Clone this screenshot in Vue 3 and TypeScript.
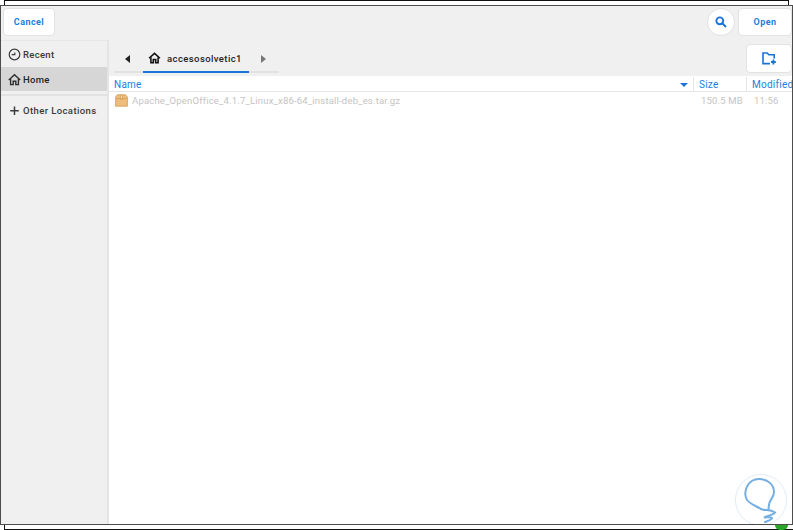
<script setup lang="ts">
const crumbs = 'accesosolvetic1'
</script>

<template>
  <div class="page">
    <div class="behind-top"></div>
    <div class="dialog">
      <header class="header">
        <button class="btn cancel">Cancel</button>
        <div class="spacer"></div>
        <button class="round" aria-label="Search">
          <svg width="12" height="12" viewBox="0 0 14 14" fill="none" stroke="#1a73d9" stroke-width="2.2">
            <circle cx="5.6" cy="5.6" r="4" />
            <path d="M8.5 8.5 12.8 12.8" />
          </svg>
        </button>
        <button class="btn open">Open</button>
      </header>
      <div class="main">
        <aside class="side">
          <div class="place">
            <svg width="13" height="13" viewBox="0 0 13 13" fill="none" stroke="#3c3c3c" stroke-width="1.2">
              <circle cx="6.5" cy="6.5" r="5.3" />
              <path d="M3.6 6.7H6.8V4.6" />
            </svg>
            <span>Recent</span>
          </div>
          <div class="place active">
            <svg width="13" height="13" viewBox="0 0 13 13" fill="none" stroke="#2e2e2e" stroke-width="1.4">
              <path d="M.8 7 6.5 1.8 12.2 7" />
              <path d="M2.6 6V11.6H5.2V8.2H7.8V11.6H10.4V6" />
            </svg>
            <span>Home</span>
          </div>
          <div class="divider"></div>
          <div class="place other">
            <svg width="13" height="13" viewBox="0 0 13 13" fill="none" stroke="#3c3c3c" stroke-width="1.5">
              <path d="M6.500 2.500V11M2.200 6.750H10.800" />
            </svg>
            <span>Other Locations</span>
          </div>
        </aside>
        <section class="content">
          <div class="pathbar">
            <div class="arrow-left"></div>
            <div class="crumb">
              <svg width="13" height="12" viewBox="0 0 13 13" fill="none" stroke="#111" stroke-width="1.7">
                <path d="M.6 6.800 6.500 1.500 12.400 6.800" />
                <path d="M2.600 5.600V11.600H5.200V8.200H7.800V11.600H10.400V5.600" />
              </svg>
              <span>{{ crumbs }}</span>
            </div>
            <div class="arrow-right"></div>
            <div class="spacer"></div>
            <button class="btn newfolder" aria-label="New folder">
              <svg width="15" height="13" viewBox="0 0 15 13" fill="none" stroke="#1a73d9" stroke-width="1.6">
                <path d="M8 11.600H1V1H5.200L6.800 2.800H12.200V6.400" />
                <path d="M11.400 7.600V12.400M9 10H13.800" stroke-width="1.8" />
              </svg>
            </button>
          </div>
          <div class="cols">
            <div class="col name">Name<span class="sort"></span></div>
            <div class="col size">Size</div>
            <div class="col modified">Modified</div>
          </div>
          <div class="row">
            <div class="cell name">
              <svg width="13" height="13" viewBox="0 0 13 13">
                <path d="M.6 3 2.400.8H10.600L12.400 3V12.200H.6Z" fill="#eebc7c" stroke="#d69a4e" stroke-width=".8" />
                <path d="M1 4.500H12M5.500 1H7.500V5.500H5.500Z" fill="#f8e2bd" stroke="#d69a4e" stroke-width=".7" />
              </svg>
              <span>Apache_OpenOffice_4.1.7_Linux_x86-64_install-deb_es.tar.gz</span>
            </div>
            <div class="cell size">150.5 MB</div>
            <div class="cell modified">11:56</div>
          </div>
          <svg class="mark" width="54" height="54" viewBox="0 0 54 54" fill="none">
            <circle cx="27" cy="27" r="25.500" stroke="#e3ebf5" stroke-width="1" />
            <path d="M27 36C20 32 14 30 12.500 26 9 18 14 6 25 6 34 6 40 12 40 19 40 25 35 27 35 32 34.500 34 34.500 35 34.500 37" stroke="#74aee3" stroke-width="2" stroke-linecap="round" />
            <path d="M27 36C31 38 36 36 41 39.500 38 43 33 42.500 30 44.500 34 44 38 44 38 45.500 36 48 33 48 31 49" stroke="#74aee3" stroke-width="2" stroke-linecap="round" />
          </svg>
        </section>
      </div>
    </div>
    <div class="behind-bottom"><span class="green"></span></div>
  </div>
</template>

<style>
html, body { margin: 0; background: #fff; overflow: hidden; }
</style>

<style scoped>
.page {
  width: 793px;
  height: 530px;
  display: flex;
  flex-direction: column;
  font-family: "Roboto", "Liberation Sans", sans-serif;
  font-size: 10px;
  overflow: hidden;
  background: #fff;
}
.behind-top {
  height: 5px;
  flex: none;
  margin: 0 4px;
  box-sizing: border-box;
  border: 1px solid #111;
  border-bottom: 0;
}
.dialog {
  flex: 1;
  min-height: 0;
  display: flex;
  flex-direction: column;
  border: 1px solid #4d4d4d;
  background: #f0f0f0;
}
.header {
  height: 34px;
  flex: none;
  display: flex;
  align-items: center;
  padding: 0 0 2px 2px;
  box-sizing: border-box;
}
.spacer { flex: 1; }
.btn {
  background: #fff;
  border: 1px solid #e2e2e2;
  border-radius: 4px;
  font: 700 9px "Roboto", "Liberation Sans", sans-serif;
  letter-spacing: .45px;
  color: #1a7fe0;
  padding: 0;
}
.cancel { width: 52px; height: 28px; }
.open { width: 54px; height: 28px; margin-left: 3px; }
.round {
  width: 28px;
  height: 28px;
  border-radius: 50%;
  background: #fff;
  border: 1px solid #e2e2e2;
  display: flex;
  align-items: center;
  justify-content: center;
  padding: 0;
}
.main { flex: 1; min-height: 0; display: flex; }
.side {
  width: 106px;
  flex: none;
  border-right: 2px solid #e4e4e4;
  border-top: 1px solid #e6e6e6;
  background: #f0f0f0;
  color: #3a3a3a;
  padding-top: 1px;
}
.place {
  height: 24px;
  display: flex;
  align-items: center;
  gap: 2px;
  padding-left: 7px;
  font-weight: 500;
  letter-spacing: .3px;
  font-size: 9.5px;
}
.place.active { background: #d6d6d6; margin-top: 1px; color: #222; }
.divider { height: 2px; background: #e2e2e2; margin-top: 3px; }
.place.other { margin-top: 2px; letter-spacing: .4px; }
.content {
  flex: 1;
  min-width: 0;
  display: flex;
  flex-direction: column;
  position: relative;
  background: #fff;
  overflow: hidden;
}
.pathbar {
  height: 36px;
  flex: none;
  display: flex;
  align-items: flex-start;
  background: #f0f0f0;
  position: relative;
}
.pathbar::after {
  content: "";
  position: absolute;
  left: 5px;
  width: 165px;
  bottom: 3px;
  height: 2px;
  background: #e2e2e2;
}
.arrow-left, .arrow-right {
  width: 0;
  height: 0;
  border-top: 4px solid transparent;
  border-bottom: 4px solid transparent;
  margin-top: 15px;
}
.arrow-left { border-right: 5px solid #222; margin-left: 16px; }
.arrow-right { border-left: 5px solid #777; margin-left: 12px; }
.crumb {
  width: 106px;
  height: 33px;
  margin-left: 13px;
  box-sizing: border-box;
  border-bottom: 2px solid #1a73d9;
  display: flex;
  align-items: center;
  justify-content: center;
  gap: 6px;
  color: #222;
  font-weight: 500;
  font-size: 9.5px;
  letter-spacing: .4px;
  position: relative;
  z-index: 1;
  padding: 5px 2px 0 0;
}
.newfolder {
  width: 46px;
  height: 29px;
  flex: none;
  margin-top: 4px;
  display: flex;
  align-items: center;
  justify-content: center;
}
.cols {
  height: 16px;
  flex: none;
  display: flex;
  color: #1a7fe0;
  font-size: 10px;
  letter-spacing: .25px;
  border-bottom: 1px solid #e6e6e6;
  box-sizing: border-box;
  padding-top: 1px;
}
.col { display: flex; align-items: center; box-sizing: border-box; }
.col.name { flex: 1; padding-left: 5px; position: relative; }
.col.size { width: 53px; padding-left: 5px; border-left: 1px solid #e6e6e6; }
.col.modified { width: 46px; padding-left: 5px; border-left: 1px solid #e6e6e6; white-space: nowrap; }
.sort {
  position: absolute;
  right: 5px;
  top: 6px;
  border-left: 4px solid transparent;
  border-right: 4px solid transparent;
  border-top: 4px solid #1a73d9;
}
.row {
  display: flex;
  height: 16px;
  align-items: center;
  color: #c4c4c4;
  font-size: 9.5px;
  letter-spacing: .19px;
}
.cell { display: flex; align-items: center; white-space: nowrap; box-sizing: border-box; }
.cell.name { flex: 1; gap: 4px; padding-left: 6px; }
.cell.size { width: 53px; padding-left: 8px; }
.cell.modified { width: 46px; padding-left: 8px; }
.mark { position: absolute; right: 4px; bottom: -3px; }
.behind-bottom {
  height: 5px;
  flex: none;
  margin-left: 4px;
  box-sizing: border-box;
  border-left: 1px solid #111;
  border-bottom: 1px solid #111;
  position: relative;
}
.green {
  position: absolute;
  right: 5px;
  top: 0;
  width: 13px;
  height: 5px;
  border-radius: 0 0 7px 7px;
  background: #2aa52a;
}
</style>
